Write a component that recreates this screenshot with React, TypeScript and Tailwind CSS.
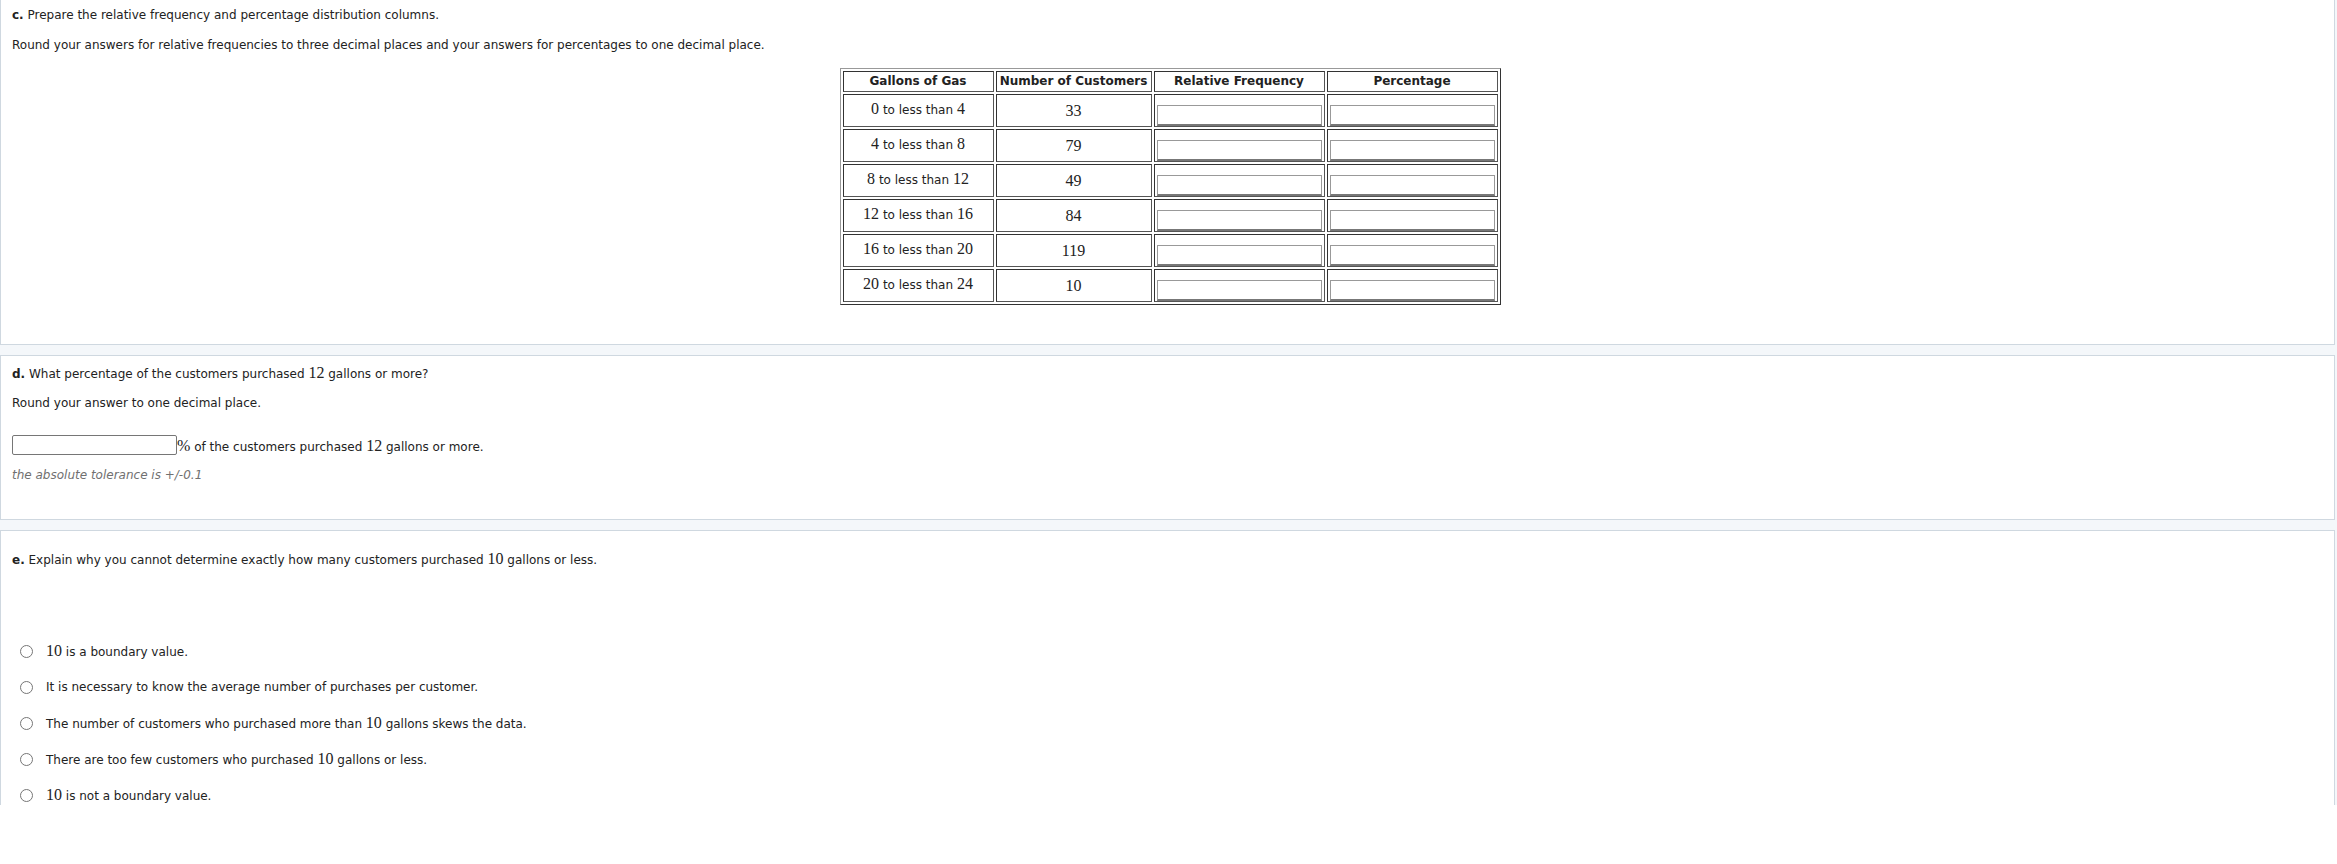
import React from 'react';

const sans = "font-['DejaVu_Sans',Verdana,sans-serif]";
const serif = "font-['Liberation_Serif','Times_New_Roman',serif]";

function N({ children }: { children: React.ReactNode }) {
    return <span className={`${serif} text-[16px] leading-none`}>{children}</span>;
}

const rows = [
    { from: '0', to: '4', count: '33' },
    { from: '4', to: '8', count: '79' },
    { from: '8', to: '12', count: '49' },
    { from: '12', to: '16', count: '84' },
    { from: '16', to: '20', count: '119' },
    { from: '20', to: '24', count: '10' },
];

const options = [
    <><N>10</N> is a boundary value.</>,
    <>It is necessary to know the average number of purchases per customer.</>,
    <>The number of customers who purchased more than <N>10</N> gallons skews the data.</>,
    <>There are too few customers who purchased <N>10</N> gallons or less.</>,
    <><N>10</N> is not a boundary value.</>,
];

function Cell({ children, className = '' }: { children?: React.ReactNode; className?: string }) {
    return (
        <td className={`border border-t-[#333] border-l-[#333] border-b-[#555] border-r-[#555] p-0 text-center ${className}`}>
            {children}
        </td>
    );
}

function Box() {
    return (
        <div className="flex h-full flex-col justify-end px-[2px]">
            <input className="h-[21px] w-full border border-[#999] border-b-2 border-b-[#777] bg-white outline-none" />
        </div>
    );
}

export default function App() {
    return (
        <div className={`${sans} h-[805px] overflow-hidden bg-[#f4f7fa] text-[12px] text-[#222]`}>
            {/* part c */}
            <div className="h-[345px] w-[2335px] border border-t-0 border-[#cfd8e0] bg-white px-[11px]">
                <p className="pt-[8px] leading-[15px]">
                    <b>c.</b> Prepare the relative frequency and percentage distribution columns.
                </p>
                <p className="mt-[15px] leading-[15px]">
                    Round your answers for relative frequencies to three decimal places and your answers for percentages to one decimal place.
                </p>
                <div className="mt-[15px] flex justify-center pl-[5px]">
                    <table className="border-separate border-spacing-[2px] border border-t-[#999] border-l-[#999] border-b-[#333] border-r-[#333]">
                        <thead>
                            <tr className="h-[21px] font-bold leading-[15px]">
                                <Cell className="w-[151px]">Gallons of Gas</Cell>
                                <Cell className="w-[156px]">Number of Customers</Cell>
                                <Cell className="w-[171px]">Relative Frequency</Cell>
                                <Cell className="w-[171px]">Percentage</Cell>
                            </tr>
                        </thead>
                        <tbody>
                            {rows.map((r) => (
                                <tr key={r.from} className="h-[33px]">
                                    <Cell>
                                        <div className="pb-[2px]"><N>{r.from}</N> to less than <N>{r.to}</N></div>
                                    </Cell>
                                    <Cell>
                                        <div className="pt-[2px]"><N>{r.count}</N></div>
                                    </Cell>
                                    <Cell className="align-bottom"><Box /></Cell>
                                    <Cell className="align-bottom"><Box /></Cell>
                                </tr>
                            ))}
                        </tbody>
                    </table>
                </div>
            </div>

            {/* part d */}
            <div className="mt-[10px] h-[165px] w-[2335px] border border-[#cfd8e0] bg-white px-[11px]">
                <p className="pt-[9px] leading-[16px]">
                    <b>d.</b> What percentage of the customers purchased <N>12</N> gallons or more?
                </p>
                <p className="mt-[14px] leading-[15px]">Round your answer to one decimal place.</p>
                <div className="mt-[24px] flex h-[20px] items-center">
                    <input className="h-[20px] w-[165px] rounded-[2px] border border-[#767676] bg-white outline-none" />
                    <span className="pt-[3px]"><N>%</N> of the customers purchased <N>12</N> gallons or more.</span>
                </div>
                <p className="mt-[13px] italic leading-[15px] text-[#707070]">the absolute tolerance is +/-0.1</p>
            </div>

            {/* part e */}
            <div className="mt-[10px] h-[300px] w-[2335px] border border-b-0 border-[#cfd8e0] bg-white px-[11px]">
                <p className="pt-[20px] leading-[16px]">
                    <b>e.</b> Explain why you cannot determine exactly how many customers purchased <N>10</N> gallons or less.
                </p>
                <div className="mt-[75px] flex flex-col gap-[20px] pl-[8px]">
                    {options.map((o, i) => (
                        <label key={i} className="flex h-[16px] items-center gap-[13px]">
                            <span className="h-[13px] w-[13px] shrink-0 rounded-full border border-[#767676] bg-white" />
                            <span className="leading-[16px]">{o}</span>
                        </label>
                    ))}
                </div>
            </div>
        </div>
    );
}
